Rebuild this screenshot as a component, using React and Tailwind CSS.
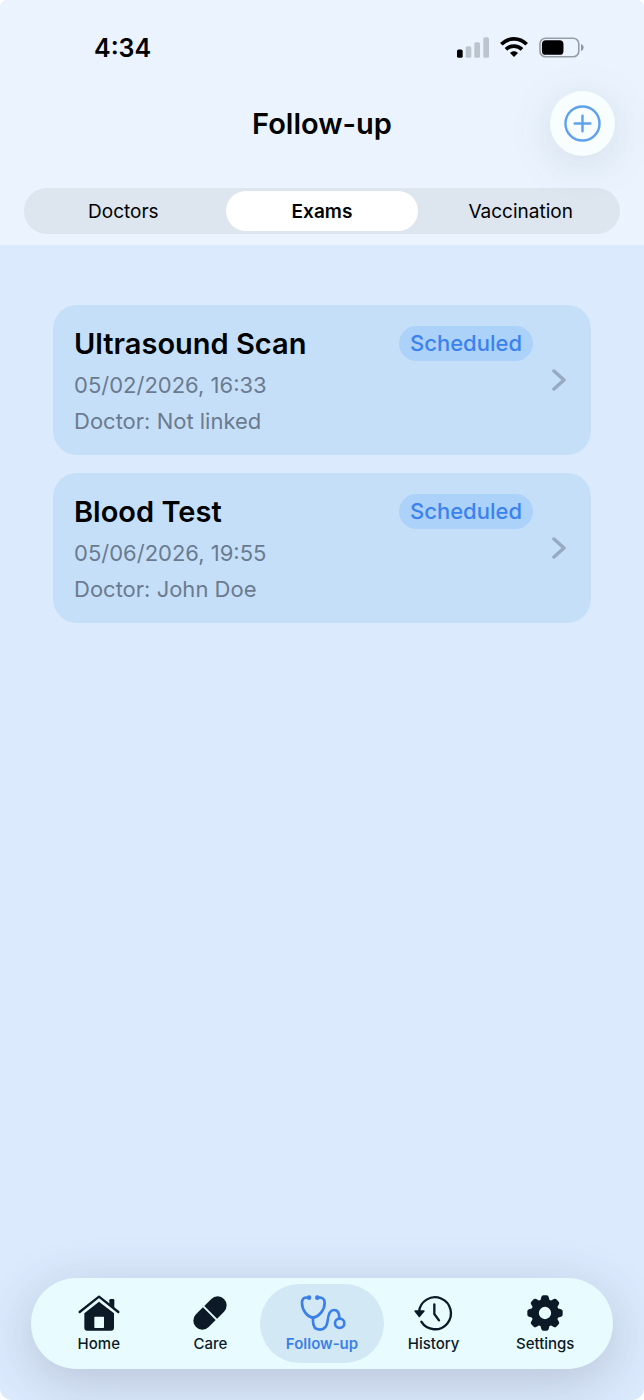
import { useState } from "react";

const exams = [
  { name: "Ultrasound Scan", date: "05/02/2026, 16:33", doctor: "Not linked", status: "Scheduled" },
  { name: "Blood Test", date: "05/06/2026, 19:55", doctor: "John Doe", status: "Scheduled" },
];

const segments = ["Doctors", "Exams", "Vaccination"];

function SignalIcon() {
  return (
    <svg viewBox="0 0 96 62" className="h-[21px] w-8" aria-hidden="true">
      <rect x="0" y="37" width="17" height="25" rx="5" fill="#000" />
      <g fill="#bcc4cd">
        <rect x="26" y="27" width="17" height="35" rx="5" />
        <rect x="52" y="15" width="17" height="47" rx="5" />
        <rect x="79" y="0" width="17" height="62" rx="5" />
      </g>
    </svg>
  );
}

function WifiIcon() {
  return (
    <svg viewBox="0 0 84 60" className="h-5 w-7" fill="none" stroke="#000" strokeWidth="11" aria-hidden="true">
      <path d="M4 22 C25 0 59 0 80 22" />
      <path d="M18 37 C31 24 53 24 66 37" />
      <path d="M42 60 L30 48 C37 41 47 41 54 48 Z" fill="#000" stroke="none" />
    </svg>
  );
}

function BatteryIcon() {
  return (
    <svg viewBox="0 0 138 63" className="h-[21px] w-[45px]" aria-hidden="true">
      <rect x="3" y="3" width="119" height="57" rx="17" fill="none" stroke="#979da5" strokeWidth="5" />
      <rect x="9" y="9" width="66" height="45" rx="12" fill="#000" />
      <path d="M129 21 Q137 24 137 31.500 Q137 39 129 42 Z" fill="#8f959c" />
    </svg>
  );
}

function TabIcon({ children }) {
  return (
    <svg viewBox="0 0 144 114" className="h-[38px] w-12" fill="none" strokeLinecap="round" strokeLinejoin="round" aria-hidden="true">
      {children}
    </svg>
  );
}

function HomeIcon() {
  return (
    <TabIcon>
      <path d="M14 54 L72 8 L130 54" stroke="currentColor" strokeWidth="7" />
      <path d="M103 19 Q103 15 107 15 H114 Q118 15 118 19 V42 L103 30 Z" fill="currentColor" />
      <path
        d="M72 23 L117 58 V101 Q117 110 108 110 H37 Q28 110 28 101 V58 Z M60 68 Q58 68 58 70 V100 Q58 102 60 102 H85 Q87 102 87 100 V70 Q87 68 85 68 Z"
        fill="currentColor"
        fillRule="evenodd"
      />
    </TabIcon>
  );
}

function CareIcon() {
  return (
    <TabIcon>
      <g transform="rotate(-45 72 57)" fill="currentColor">
        <path d="M69 30 H39.500 A27 27 0 0 0 39.500 84 H69 Z" />
        <path d="M75 30 H104.500 A27 27 0 0 1 104.500 84 H75 Z" />
      </g>
    </TabIcon>
  );
}

function StethoscopeIcon() {
  return (
    <TabIcon>
      <g transform="translate(-3 0)">
        <circle cx="36" cy="11" r="7" fill="currentColor" />
        <circle cx="61" cy="11" r="7" fill="currentColor" />
        <g stroke="currentColor" strokeWidth="8">
          <path d="M35 11 C20 9 15 14 15 27 C15 48 30 68 48 71 C66 68 83 48 83 27 C83 14 76 9 61 11" />
          <path d="M48 71 V82 C48 98 56 107 69 107 C83 107 90 98 92 80 C94 60 98 48 111 48 C122 48 127 58 127 72" />
          <circle cx="128" cy="88" r="14" />
        </g>
      </g>
    </TabIcon>
  );
}

function HistoryIcon() {
  return (
    <TabIcon>
      <g transform="translate(-3 0)" stroke="currentColor">
        <path d="M30 54 A48 48 0 1 1 37 83" strokeWidth="7" />
        <path d="M18 51 H45 L31 68 Z" fill="currentColor" strokeWidth="4" />
        <path d="M76 31 V60 L90 79" strokeWidth="7" />
      </g>
    </TabIcon>
  );
}

function SettingsIcon() {
  return (
    <TabIcon>
      <circle cx="72" cy="57" r="30" stroke="currentColor" strokeWidth="23" />
      {[0, 45, 90, 135, 180, 225, 270, 315].map((angle) => (
        <path
          key={angle}
          d="M58 20 L61 9 Q62 4 67 4 H77 Q82 4 83 9 L86 20 Z"
          transform={`rotate(${angle} 72 57)`}
          fill="currentColor"
        />
      ))}
    </TabIcon>
  );
}

const tabs = [
  { label: "Home", Icon: HomeIcon },
  { label: "Care", Icon: CareIcon },
  { label: "Follow-up", Icon: StethoscopeIcon },
  { label: "History", Icon: HistoryIcon },
  { label: "Settings", Icon: SettingsIcon },
];

function ExamCard({ exam }) {
  return (
    <button
      type="button"
      className="flex w-full items-center rounded-3xl bg-[#c6dff8] pt-[18px] pr-[25px] pb-4 pl-[21px] text-left"
    >
      <span className="flex grow flex-col">
        <span className="mb-[2px] flex items-start justify-between">
          <span className="text-[29px] leading-[42px] font-semibold text-black">{exam.name}</span>
          <span className="mt-[3px] rounded-full bg-[#add2fa] px-[11px] text-[22px] leading-[35px] font-medium text-[#3b82f0]">
            {exam.status}
          </span>
        </span>
        <span className="text-[22px] leading-9 text-[#6a7b8f]">{exam.date}</span>
        <span className="text-[22px] leading-9 text-[#6a7b8f]">Doctor: {exam.doctor}</span>
      </span>
      <svg viewBox="0 0 14 24" className="ml-[19px] h-6 w-[14px]" fill="none" stroke="#98aac2" strokeWidth="3.500" strokeLinecap="round" strokeLinejoin="round" aria-hidden="true">
        <path d="M2 2 L12 11 L2 20" />
      </svg>
    </button>
  );
}

export default function App() {
  const [segment, setSegment] = useState("Exams");
  const [tab, setTab] = useState("Follow-up");

  return (
    <div className="bg-white font-[Inter,sans-serif]">
      <div className="flex min-h-screen flex-col overflow-hidden rounded-t-lg rounded-b-xl bg-[#dbeafd]">
        <header className="bg-[#ebf4fe] px-6 pt-9 pb-[11px]">
          <div className="flex h-6 items-center justify-between pr-9 pl-[70px]">
            <span className="text-[25px] leading-6 font-semibold text-black">4:34</span>
            <div className="flex items-center gap-[11px] pb-[2px]">
              <SignalIcon />
              <WifiIcon />
              <BatteryIcon />
            </div>
          </div>
          <div className="mt-[31px] grid grid-cols-[1fr_auto_1fr] items-center">
            <h1 className="col-start-2 text-[29px] leading-9 font-semibold text-black">Follow-up</h1>
            <button
              type="button"
              aria-label="Add exam"
              className="mr-[5px] flex size-[65px] items-center justify-center justify-self-end rounded-full bg-[#f8fdff] shadow-[0_8px_44px_rgba(60,75,100,0.14)]"
            >
              <svg viewBox="0 0 38 38" className="size-[37px]" fill="none" stroke="#5ea2ec" strokeWidth="2.500" strokeLinecap="round" aria-hidden="true">
                <circle cx="19" cy="19" r="17.500" />
                <path d="M19 11 V27 M11 19 H27" />
              </svg>
            </button>
          </div>
          <div role="tablist" className="mt-8 grid grid-cols-3 rounded-full bg-[#dde5ee] py-[3px]">
            {segments.map((name) => (
              <button
                key={name}
                type="button"
                role="tab"
                aria-selected={segment === name}
                onClick={() => setSegment(name)}
                className={
                  segment === name
                    ? "mx-[3px] rounded-full bg-white pt-[2px] text-[19px] leading-[38px] font-semibold text-black"
                    : "mx-[3px] rounded-full pt-[2px] text-[19px] leading-[38px] font-normal text-black"
                }
              >
                {name}
              </button>
            ))}
          </div>
        </header>

        <main className="flex grow flex-col gap-[18px] px-[53px] pt-[60px]">
          {exams.map((exam) => (
            <ExamCard key={exam.name} exam={exam} />
          ))}
        </main>

        <div className="px-[31px] pb-[31px]">
          <nav className="grid grid-cols-5 rounded-full bg-[#e8fbff] px-3 py-[6px] shadow-[0_12px_52px_rgba(60,60,80,0.22)]">
            {tabs.map(({ label, Icon }) => (
              <button
                key={label}
                type="button"
                aria-current={tab === label ? "page" : undefined}
                onClick={() => setTab(label)}
                className={
                  tab === label
                    ? "-mx-[6px] flex flex-col items-center rounded-full bg-[#d3e8f5] pt-[10px] pb-[7px] text-[15px] leading-6 font-semibold text-[#3b7fe8]"
                    : "-mx-[6px] flex flex-col items-center rounded-full pt-[10px] pb-[7px] text-[15px] leading-6 font-medium text-[#0b1a26]"
                }
              >
                <Icon />
                <span>{label}</span>
              </button>
            ))}
          </nav>
        </div>
      </div>
    </div>
  );
}
